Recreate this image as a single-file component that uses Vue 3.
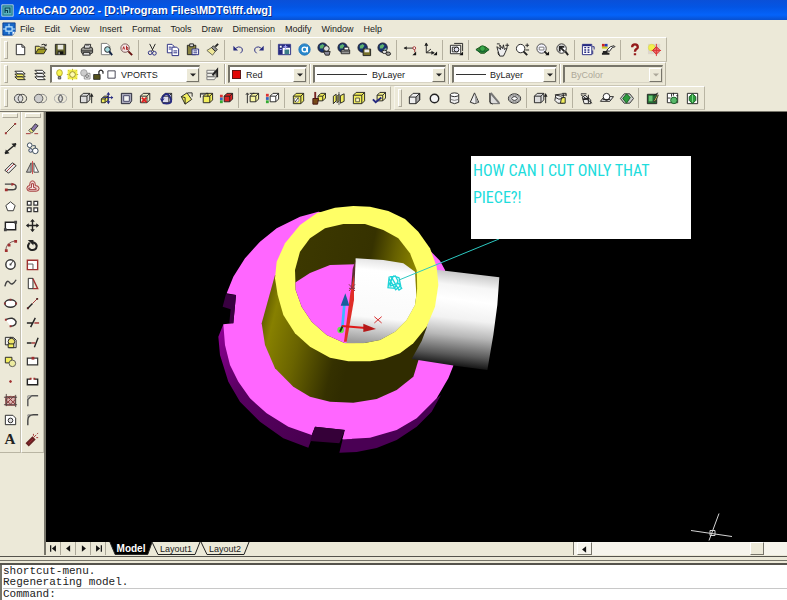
<script setup>
import { h, ref } from 'vue'

const circ = (x, y, r, ry = r) => `M${x - r} ${y}a${r} ${ry} 0 1 0 ${2 * r} 0a${r} ${ry} 0 1 0 ${-2 * r} 0z`
const cube = (fill = '#fff', x = 3, y = 5, s = 7) => [
  `M${x + 0.5} ${y + 0.5}h${s}v${s}h-${s}zl3-3h${s}v${s}l-3 3m0-${s}l3-3`, fill,
]
const Y = '#f2ee5c'
const R = '#a03030'
const G = '#2c9a3c'
const N = '#262a80'
const globe = [[circ(6, 6, 5), '#17306e', '#223'], ['M3 4l3-2 2 2-2 3-3 0z', '#5cb070', 'none'], ['M7 8l3-2v3l-2 1z', '#8cc4a0', 'none']]
const page = (x, y) => [`M${x} ${y}h5l2 2v7h-7z`, '#fff', N]

// Each icon is a list of shapes: [path, fill, stroke, stroke width]
const icons = {
  new: [['M3.5 2.5h6l3 3v8h-9z', '#fff'], ['M9.5 2.5v3h3']],
  open: [['M2.5 12.5v-8h4l1 1h5v2', '#e8e070'], ['M2.5 12.5l3-5h9l-3 5z', '#a09a20'], ['M9 3q3-2 5 1m0-2v2h-2']],
  save: [['M2.5 2.5h11v11h-11z', '#60602c'], ['M5 3h6v5H5z', '#e8e8e0', 'none'], ['M5 10h6v3H5z', '#111', 'none'], ['M6 11h1v2H6z', '#fff', 'none']],
  print: [['M2.5 7.5l2-2h9l1 2v4l-2 1h-9l-1-2z', '#9a9a94'], ['M5.500 6.500l1-4h6l-1 4z', '#fff'], ['M3 9.500h11M4 11.500h8'], ['M7 4h4', 'none', '#555'], ['M5 11h6l1 3H4z', '#ddd']],
  preview: [['M2.500 1.500h6l3 3v9h-9z', '#fff', '#777'], [circ(9, 8, 3), '#a8dce0'], ['M11 10l3 4', 'none', '#124', 2]],
  find: [[circ(6.5, 6.5, 4.500), '#f4e4e4', '#755'], ['M4 8l1-3 1 3M8 4v4m0-2h1.500v2h-1.500', 'none', '#a22'], ['M10 10l4 4', 'none', '#611', 2]],
  cut: [['M5 2l4 8M11 2L7 10'], [circ(5.5, 11.500, 2), 'none', N], [circ(10, 12, 2), 'none', N]],
  copy: [page(2.5, 2.5), page(7.5, 5.500), ['M4 5.500h3M4 7.500h3M9 9.500h4M9 11.500h4', 'none', N]],
  paste: [['M2.500 3.500h9v10h-9z', '#8a8440'], ['M5 2h4v3H5z', '#ddd'], ['M7.500 7.500h7v6h-7z', '#fff', N], ['M9 9.500h4M9 11.500h4', 'none', N]],
  match: [['M2 9l5-3 4 4-3 4z', '#f0e898', '#665'], ['M7 6l2-2 4 4-2 2z', '#999'], ['M11 5l3-3', 'none', '#222', 2]],
  undo: [['M4 8q4-5 8-1 1 3-2 5', 'none', N], ['M2.500 4v5h5z', N, 'none']],
  redo: [['M12 8q-4-5-8-1-1 3 2 5', 'none', N], ['M13.500 4v5h-5z', N, 'none']],
  today: [['M1.500 2.500h13v11h-13z', '#fff', N], ['M2 3h12v3H2zM2 6h4v7H2z', N, 'none'], ['M3 4h2v2H3z', '#fff', 'none'], ['M8 8h5v5H8z', '#3c7f88', 'none'], ['M7 5h4M9 3v5M3 8h2', 'none', '#aaf']],
  point: [[circ(8, 8, 6), '#2888cc', '#1b70b8'], [circ(8, 8, 2.500), 'none', '#fff', 1.500], ['M11 5v6', 'none', '#fff', 1.500]],
  meet: [...globe, [circ(10, 7, 3), '#ddd'], ['M7 10h7l-1 4H9z', '#889']],
  publish: [...globe, ['M4.500 8.500h9v4h-9z', '#ccc'], ['M7.500 5.500h5v3h-5z', '#fff'], ['M5 10.500h8']],
  etransmit: [...globe, ['M6.500 7.500h8v7h-8z', '#76702a'], ['M8 8h5v3H8z', '#eee', 'none']],
  link: [...globe, [circ(8, 10.500, 2.500, 1.800), '#ddd'], [circ(12, 12.500, 2.500, 1.800), '#999']],
  track: [['M1 6.500h10', 'none', '#222'], ['M1 6.500l3-2v4z', '#222', 'none'], [circ(12, 6.500, 1.500), '#fff', R], ['M12.500 8v3', 'none', R], ['M14 10v4h-4z', '#111', 'none']],
  ucs: [['M3.500 2v9.500h7M3.500 11.500l5-4'], ['M2 4l1.500-3 1.500 3M9 10l3 1.500-3 1.500', '#222'], ['M15 10v4h-4z', '#111', 'none']],
  views: [['M1.500 3.500h11v9h-11z', '#fff'], ['M3.500 5.500h6v5h-6z', '#eee'], ['M5.500 1.500h9v8', 'none'], [circ(8, 8, 2.500), '#dde'], ['M15 10v4h-4z', '#111', 'none']],
  orbit: [['M1 8l5-3h5l4 3-5 4H6z', '#3a8a3a', '#175017'], [circ(8, 7, 3), '#3aa84a', '#165c20'], ['M1 8q6 5 14 0', 'none', '#163']],
  pan: [['M2 5l4 3-1-5 3 4 1-4 1 5 3-2-2 5-2 4H5L3 9z', '#eee'], ['M11 3.500h4M13 1.500v4M2 2h3M3 11l1 3']],
  zoomrt: [[circ(6, 7, 4.500), '#fff'], ['M9 10l4 4', 'none', '#222', 2], ['M11 3.500h4M13 1.500v4M11 8.500h4']],
  zoomwin: [[circ(7, 7, 5), '#f4f4ff', '#444'], ['M4.500 5.500h5v3h-5z', '#fff', '#777'], ['M10 10l3 3', 'none', '#222', 2], ['M15 10v4h-4z', '#111', 'none']],
  zoomprev: [[circ(7, 7, 5), '#fff'], ['M5 10V5h5M5 5l5 5', 'none', '#222', 2], ['M11 10l3 4', 'none', '#222', 2]],
  dc: [['M1.500 2.500h10v11h-10z', '#fff', N], ['M2 3.500h9', 'none', N, 2], ['M3.500 6h2M7 6h2M3.500 8.500h2M7 8.500h2M3.500 11h2M7 11h2', 'none', N, 1.500], ['M12 5h2v3M12.500 9v4', 'none', N]],
  props: [['M1 2h3v3H1z', '#c22', 'none'], ['M4 2h3v3H4z', '#263cb0', 'none'], ['M1 5h6v2H1z', '#cc2', 'none'], ['M1 12.500h8M2 10.500h5', 'none', '#222', 2], ['M6 9l4-4 4-1 1 1-3 1-3 4z', '#fff']],
  help: [['M5.500 5.500q0-3 3-3t3 3q0 1-1.500 2T8.500 10.500M8.500 12v2', 'none', '#941a1a', 2.500]],
  assist: [['M1 2h13v11H1z', '#ddd6cb', 'none'], [circ(5, 6, 3.500), '#f2f04c', '#dcdc54'], ['M10 5l4 4-4 4-4-4z', '#ee7070', '#c22'], ['M10 2v13M5 9h10', 'none', '#d33']],
  layers: [['M2 4.500h8l3 3H5z', '#fff'], ['M2 7.500h8l3 3H5z', Y], ['M2 10.500h8l3 3H5z', '#eee36e']],
  layers2: [['M2 3.500h8l3 3H5z', '#fff'], ['M2 7h8l3 3H5z', '#fff'], ['M2 10.500h8l3 3H5z', '#fff']],
  layerprev: [['M2 3.500h9l-2 3H2zM2 7h10l-2 3H2zM2 10.500h10l-2 3H2z', '#f5f5ee', '#777'], ['M8 9l5-6v8', 'none', '#222', 2]],
  bulb: [[circ(8, 6, 3.500, 4), '#f8f450', '#aaa020'], ['M6.500 10.500h3v3h-3z', '#999', '#444']],
  sun: [['M2 2h12v12H2z', '#f5f14c', 'none'], [circ(8, 8, 3.500), '#fffcb0', '#887f20'], ['M8 1v2M8 13v2M1 8h2M13 8h2M3 3l1 1M13 3l-1 1M3 13l1-1M13 13l-1-1', 'none', '#aaa020']],
  freeze: [['M6.500 6.500h7v7h-7z', '#fff', '#777'], [circ(6, 6, 4), '#ccc', '#999'], [circ(10, 10, 2), '#bbb', '#777']],
  lock: [['M2 8h8v6H2z', '#55521c', '#222'], ['M8.500 8V4.500q2.500-4 5 0V7', 'none', '#222', 1.500]],
  swatch: [['M3.500 3.500h9v9h-9z', '#fff', '#223']],
  union: [[circ(6, 8, 4.500), '#ddd', '#444'], [circ(10, 8, 4.500), 'none', '#444']],
  subtract: [[circ(10, 8, 4.500), 'none', '#888'], [circ(6, 8, 4.500), '#ccc', '#555']],
  intersect: [[circ(6, 8, 4.500), 'none', '#aaa'], [circ(10, 8, 4.500), 'none', '#aaa'], ['M8 4q4 4 0 8-4-4 0-8z', '#ddd', '#444']],
  extrude: [cube('#ddd', 1), ['M13.500 13V5'], ['M11.500 6l2-4 2 4z', '#222', 'none']],
  movef: [cube(Y, 2, 8, 4), ['M10 2v11M4 7h11', 'none', N], ['M8 4l2-3 2 3zM13 5l2 2-2 2zM8 11l2 3 2-3z', N, 'none']],
  offsetf: [['M2.500 2.500h11v8l-2 3h-9z', '#aab', '#223'], ['M5 5h6v6H5z', '#f4f4f4', '#446']],
  deletef: [cube('#eec', 1), ['M3 7l5 5M8 7l-5 5', 'none', '#d22', 2]],
  rotatef: [cube('#dde', 3), ['M3 8q5-9 9-1t-8 6', 'none', N, 2], ['M1 8h5L3 12z', N, 'none']],
  taperf: [['M2.500 6l6-4 5 7-7 5z', '#f4f060'], ['M2.500 6l4 1v7', 'none'], ['M9 2h5v4']],
  copyf: [cube(Y, 4), ['M1.500 7V2.500h8V6', 'none'], ['M2 3.500h6', 'none', '#666']],
  colorf: [cube('#d22', 5, 5, 6), ['M1 4h3v3H1z', '#d33', 'none'], ['M1 7h3v3H1z', '#36b', 'none'], ['M1 10h3v3H1z', '#3a3', 'none']],
  copye: [cube('#f8f6a0', 5, 5, 6), ['M2.500 13V3M1 4l1.500-2L4 4M5 2.500h5', 'none']],
  colore: [cube('#fff', 5, 5, 6), ['M1 3h3v3H1z', '#d33', 'none'], ['M1 6.500h3v3H1z', '#36b', 'none'], ['M1 10h3v3H1z', '#3a3', 'none']],
  imprint: [cube(Y, 2, 5, 8), [circ(6, 9.500, 2.500), '#fff', '#887'], ['M4 12l4-5']],
  clean: [cube(Y, 7, 5, 5), ['M4.500 1v7', 'none', '#722', 2], ['M2 8h6l-1 6H2z', '#774a18', '#411']],
  separate: [['M2.500 5.500l3-2v7l-3 3zM6.500 5.500l2-2v7l-2 2z', Y], ['M10 5l4-2v8l-4 2z', Y], ['M8.500 1v14', 'none', '#555']],
  shell: [cube(Y, 2, 4, 9), ['M5 7.500h4v4H5z', '#fffbb8', '#554']],
  check: [cube('#f6f290', 6, 4, 6), ['M2 9l3 3 6-5', 'none', N, 2]],
  box: [['M2.500 6.500l4-4h7v7l-4 4h-7z', '#eee'], ['M9.500 6.500l4-4v7l-4 4z', '#aaa'], ['M2.500 6.500h7']],
  sphere: [[circ(8, 8, 4.500), '#f4f4f4', '#222', 1.500]],
  cylinder: [['M3.500 4v8q4.500 3 9 0V4z', '#eee'], [circ(8, 4, 4.500, 2), '#fff'], ['M4 9q4 2 8 0', 'none', '#777']],
  cone: [['M8 2L3.500 12q4.500 3 9 0z', '#eee'], ['M8 2l1 11 3-1z', '#999', 'none']],
  wedge: [['M3.500 2.500v11h10z', '#ddd', '#666'], ['M3 2v10l3 2'], ['M4 2l9 11', 'none', '#777', 2]],
  torus: [[circ(8, 8, 6.500, 5), '#ddd'], [circ(8, 8, 3, 2), '#fff'], [circ(8, 8, 5, 3.500), 'none', '#888']],
  revolve: [['M3 4l8-1v10H5l-3-3z', '#eee'], ['M9 7h4v6H8z', Y], ['M2 4q6 3 12 0M3 7q3 3 7 1', 'none'], ['M10 2.500h4v3']],
  slice: [['M3.500 6.500l3-2 6 5v4h-7z', '#eee'], ['M2 4l12 9M10 4v9M2 3h6', 'none', '#222'], ['M4 9l6-1', 'none', '#222', 2]],
  section: [['M1.500 11l4-5h10l-4 5z', '#eee'], [circ(8, 6, 3.500), '#fff'], ['M5 8q3 4 6 0M4 9h8']],
  interfere: [['M1.500 8l4-5h6l4 5-4 5h-6z', '#ccc', '#333'], ['M8 3l4 4-4 6-4-5z', G, '#165c20']],
  drawing: [['M2.500 3.500h10v10h-10z', '#246b32'], ['M4 5h4v6H4z', '#64c270', 'none'], ['M9 5l5-3M10 12l4-8', 'none', '#222'], ['M9 11l4-7 1 1-3 6z', '#f2ee5c', '#333']],
  view: [['M2.500 2.500h11v10h-11z', '#fff'], ['M3 7.500h3M7 3v3M9 2v3M12 5h2', 'none'], [circ(9.500, 10, 3.500), '#58b86a', '#175c23']],
  profile: [['M2.500 2.500h11v11h-11z', '#fff'], ['M8 3l3.500 3v4L8 13.500 4.500 10V6z', G, '#175c23'], ['M8 4v8', 'none', '#7ddc8a']],
  line: [['M3 13L13 3', 'none', '#543'], ['M2 12h2v2H2zM12 2h2v2h-2z', R, 'none']],
  xline: [['M2 13L14 3', 'none', '#222', 1.500], ['M2 14l1-5 4 4zM14 2l-1 5-4-4z', '#222', 'none']],
  mline: [['M2 11l8-8 4 3-8 8z', '#eee'], ['M4 12l8-8', 'none', R]],
  pline: [['M2 5.500h8q4 0 4 3t-4 3H3', 'none', '#444', 1.500], ['M2 10h3v3H2zM9 4l4 1.500-4 2z', R, 'none']],
  polygon: [['M8 3l5 4-2 5.500H5L3 7z', '#fff', '#333']],
  rect: [['M2.500 4.500h11v8h-11z', '#fff', '#222', 1.500], ['M1 11h3v3H1zM12 3h3v3h-3z', '#444', 'none']],
  arc: [['M3 13q0-8 10-10', 'none', '#755'], ['M2 12h3v3H2zM5 6h3v3H5zM12 2h3v3h-3z', R, 'none']],
  circle: [[circ(8, 8, 5), '#fff', '#333', 1.500], ['M8 8l3-4', 'none', '#333'], ['M7 7h2v2H7z', '#444', 'none']],
  spline: [['M2 11q2-8 5-4t7-3', 'none', '#444', 1.500]],
  ellipse: [[circ(8, 8, 6, 4), '#fff', '#333', 1.500], ['M1 7h2v2H1zM13 7h2v2h-2zM7 3h2v2H7z', '#833', 'none']],
  earc: [['M3 5q8-4 11 2 0 5-6 5', '#fff', '#333', 1.500], ['M2 4h2v2H2zM7 11h2v2H7z', R, 'none']],
  insert: [['M2.500 2.500h6v8h-6zM8 2.500h3l3 3v8H6', '#eee'], [circ(9, 7, 3.500), '#eee36e'], ['M5.500 9.500h6v4h-6z', Y]],
  block: [['M2.500 3.500h7v6h-7z', Y], [circ(10, 10, 3.500), '#eceba0', '#555']],
  dot: [[circ(8, 8, 1), R, R]],
  hatch: [['M3 4h10v9H3z', '#dcb8b4', '#833'], ['M3 8l5-5M3 12l9-9M7 13l6-6M5 4l8 8M3 7l6 6', 'none', '#833'], ['M1 4.500h14M3.500 1v13M13.500 2v13M1 12.500h14', 'none', '#544']],
  region: [['M2.500 3.500h8l3 3v7h-11z', '#fff'], [circ(8, 9, 2.500), '#ddd']],
  erase: [['M6 9l5-6 3 2-5 6z', '#8a76a8', '#333'], ['M4 10l2-2 3 3-2 2z', '#e6e67c', '#444'], ['M1 13.500h5M10 13.500h4', 'none', R]],
  copyo: [[circ(5, 4.500, 2.500), '#fff', '#345'], [circ(11, 10.500, 3), '#fff', '#345'], [circ(6, 10, 2), '#dde', '#345'], ['M8 5h3v3', 'none', '#345']],
  mirror: [['M6.500 3v10h-5z', '#bbb', '#444'], ['M9.500 3v10h5z', '#fff', '#444'], ['M8 1v14', 'none', '#c44']],
  offset: [['M2 10q0-3 3-3 0-5 3-5t3 5q4 0 4 3 0 3-3 3H5q-3 0-3-3z', '#ecd0cc', R], ['M4 10q2-1 3-1V5h2v4q3 0 3 2H4z', '#fff', R]],
  array: [['M2.500 2.500h4v4h-4zM9.500 2.500h4v4h-4zM2.500 9.500h4v4h-4zM9.500 9.500h4v4h-4z', '#fff', '#333', 1.300]],
  move: [['M8 2v12M2 8h12', 'none', '#222', 1.500], ['M8 1l2.500 3h-5zM8 15l2.500-3h-5zM1 8l3-2.500v5zM15 8l-3-2.500v5z', '#222', 'none']],
  rotate: [['M5 5q-4 5 1 7.500Q12 14 12.500 8.500 12 5 8 4.500', 'none', '#222', 2.200], ['M3 2h6v6z', '#222', 'none']],
  scale: [['M2.500 3.500h11v10h-11z', '#fff', R, 1.500], ['M3 7.500h5.500V13', 'none', '#555']],
  stretch: [['M3.500 2.500h5v11h-5z', '#fff'], ['M8.500 3l5 10.500h-5', 'none', R, 1.500]],
  lengthen: [['M3 13l5-5', 'none', '#222', 1.500], ['M8 8l5-5', 'none', R], ['M2 12h2v2H2zM12 2h2v2h-2z', '#522', 'none']],
  trim: [['M2 8.500h7M11 3L6 13', 'none', '#222', 1.500], ['M10 8.500h5', 'none', R, 1.500]],
  extend: [['M2 8.500h5M14 3l-4 10', 'none', '#222', 1.500], ['M7 8.500h4', 'none', R, 1.500]],
  breakp: [['M2.500 4.500h11v7h-11z', '#fff', '#333', 1.300], ['M7 3h3v3H7z', R, 'none']],
  breaks: [['M6 5.500H2.500v6h11v-6H10', '#fff', '#222', 1.500], ['M5 4h2v2H5zM9 4h2v2H9z', R, 'none']],
  chamfer: [['M3 14V7l4-4h7', 'none', '#555', 1.500], ['M3 6V3h4', 'none', '#888']],
  fillet: [['M3 14V9q0-6 6-6h5', 'none', '#444', 1.500], ['M3 5V3h3', 'none', '#888']],
  explode: [['M2 12l6-6 2 2-6 6z', '#a82838', '#622', 2], ['M9 6l3-3M12 6h2M9 2v2M13 2l1-1', 'none', R]],
  first: [['M4.500 4v8', 'none', '#111', 1.500], ['M11 4v8L6 8z', '#111', 'none']],
  prev: [['M10 4v8L5 8z', '#111', 'none']],
  next: [['M6 4v8l5-4z', '#111', 'none']],
  last: [['M11.500 4v8', 'none', '#111', 1.500], ['M5 4v8l5-4z', '#111', 'none']],
  down: [['M4 6h8l-4 4z', 'currentColor', 'none']],
  app: [['M1 1h14v14H1z', '#1c7a8c', '#cfe6ee'], ['M3 3h10v10H3z', '#5bb4bf', 'none'], ['M5 11V5h6v6M5 8h3v3', 'none', '#053c50', 1.300]],
  doc: [['M1 1h14v10l-3 4H1z', '#1668c8', '#0a3c8c'], ['M4.500 5.500h7v5h-7zM8 2v4M8 10v4M1 8h3M11 8h4', 'none', '#bfe6ff', 1.300], ['M15 11l-3 4v-4z', '#fff', 'none']],
}

const Icon = (props) =>
  h('svg', { viewBox: '0 0 16 16', class: 'icon', 'aria-hidden': 'true' },
    icons[props.name].map(([d, fill = 'none', stroke = '#222', w = 1]) =>
      h('path', { d, fill, stroke, 'stroke-width': w })))
Icon.props = ['name']

const menus = ['File', 'Edit', 'View', 'Insert', 'Format', 'Tools', 'Draw', 'Dimension', 'Modify', 'Window', 'Help']
const standard = [
  ['new', 'open', 'save'], ['print', 'preview', 'find'], ['cut', 'copy', 'paste', 'match'], ['undo', 'redo'],
  ['today', 'point', 'meet', 'publish', 'etransmit', 'link'], ['track', 'ucs'], ['views'],
  ['orbit', 'pan', 'zoomrt', 'zoomwin', 'zoomprev'], ['dc', 'props'], ['help', 'assist'],
]
const solidsEdit = [
  ['union', 'subtract', 'intersect'],
  ['extrude', 'movef', 'offsetf', 'deletef', 'rotatef', 'taperf', 'copyf', 'colorf'],
  ['copye', 'colore'], ['imprint', 'clean', 'separate', 'shell', 'check'],
]
const solids = [
  ['box', 'sphere', 'cylinder', 'cone', 'wedge', 'torus'], ['extrude', 'revolve'],
  ['slice', 'section', 'interfere'], ['drawing', 'view', 'profile'],
]
const draw = ['line', 'xline', 'mline', 'pline', 'polygon', 'rect', 'arc', 'circle', 'spline', 'ellipse', 'earc', 'insert', 'block', 'dot', 'hatch', 'region', 'text']
const modify = ['erase', 'copyo', 'mirror', 'offset', 'array', 'move', 'rotate', 'scale', 'stretch', 'lengthen', 'trim', 'extend', 'breakp', 'breaks', 'chamfer', 'fillet', 'explode']
const layerState = ['bulb', 'sun', 'freeze', 'lock', 'swatch']
const tabs = ['Model', 'Layout1', 'Layout2']
const active = ref('Model')
const command = ref('')
</script>

<template>
  <div class="app">
    <header class="title"><Icon name="app" /><h1>AutoCAD 2002 - [D:\Program Files\MDT6\fff.dwg]</h1></header>

    <nav class="menu">
      <Icon name="doc" />
      <button v-for="m in menus" :key="m">{{ m }}</button>
    </nav>

    <div class="row tall">
      <div class="bar">
        <i class="grip"></i>
        <div v-for="(g, i) in standard" :key="i" class="group">
          <button v-for="n in g" :key="n" class="tool" :aria-label="n"><Icon :name="n" /></button>
        </div>
      </div>
    </div>

    <div class="row">
      <div class="bar">
        <i class="grip"></i>
        <button class="tool" aria-label="layers"><Icon name="layers" /></button>
        <button class="tool" aria-label="layer states"><Icon name="layers2" /></button>
        <div class="combo layer">
          <Icon v-for="s in layerState" :key="s" :name="s" />
          <select aria-label="Layer"><option>VPORTS</option></select>
          <span class="arrow"><Icon name="down" /></span>
        </div>
        <button class="tool" aria-label="previous layer"><Icon name="layerprev" /></button>
        <i class="split"></i>
        <div class="combo color">
          <span class="red"></span>
          <select aria-label="Color"><option>Red</option></select>
          <span class="arrow"><Icon name="down" /></span>
        </div>
        <i class="split"></i>
        <div class="combo ltype">
          <span class="rule"></span>
          <select aria-label="Linetype"><option>ByLayer</option></select>
          <span class="arrow"><Icon name="down" /></span>
        </div>
        <i class="split"></i>
        <div class="combo weight">
          <span class="rule"></span>
          <select aria-label="Lineweight"><option>ByLayer</option></select>
          <span class="arrow"><Icon name="down" /></span>
        </div>
        <i class="split"></i>
        <div class="combo style">
          <select aria-label="Plot style" disabled><option>ByColor</option></select>
          <span class="arrow"><Icon name="down" /></span>
        </div>
      </div>
    </div>

    <div class="row">
      <div v-for="(bar, b) in [solidsEdit, solids]" :key="b" class="bar">
        <i class="grip"></i>
        <div v-for="(g, i) in bar" :key="i" class="group">
          <button v-for="n in g" :key="n" class="tool" :aria-label="n"><Icon :name="n" /></button>
        </div>
      </div>
    </div>

    <main class="work">
      <aside class="docks">
        <div v-for="(list, i) in [draw, modify]" :key="i" class="dock">
          <i class="hgrip"></i>
          <button v-for="n in list" :key="n" class="tool" :aria-label="n">
            <b v-if="n === 'text'" class="letter">A</b>
            <Icon v-else :name="n" />
          </button>
        </div>
      </aside>

      <section class="drawing">
        <div class="canvas">
          <svg class="scene" viewBox="46 112 741 430" preserveAspectRatio="xMinYMin meet" role="img" aria-label="Model">
            <defs>
              <linearGradient id="wall" gradientUnits="userSpaceOnUse" x1="155" y1="330" x2="440" y2="400">
                <stop offset="0" stop-color="#5a5400" /><stop offset=".15" stop-color="#878000" />
                <stop offset=".45" stop-color="#6a6400" /><stop offset=".85" stop-color="#353100" /><stop offset="1" stop-color="#302c00" />
              </linearGradient>
              <linearGradient id="inside" gradientUnits="userSpaceOnUse" x1="280" y1="130" x2="620" y2="200">
                <stop offset="0" stop-color="#3c3800" /><stop offset=".6" stop-color="#363200" />
                <stop offset=".8" stop-color="#655f00" /><stop offset="1" stop-color="#8c8500" />
              </linearGradient>
              <linearGradient id="pipe" gradientUnits="userSpaceOnUse" x1="775" y1="232" x2="742" y2="514">
                <stop offset="0" stop-color="#c4c4c4" /><stop offset=".15" stop-color="#f6f6f6" /><stop offset=".3" stop-color="#fff" />
                <stop offset=".5" stop-color="#f2f2f2" /><stop offset=".68" stop-color="#b8b8b8" />
                <stop offset=".88" stop-color="#5a5a5a" /><stop offset="1" stop-color="#161616" />
              </linearGradient>
              <linearGradient id="inner" gradientUnits="userSpaceOnUse" x1="520" y1="190" x2="495" y2="445">
                <stop offset="0" stop-color="#e0e0e0" /><stop offset=".15" stop-color="#fff" />
                <stop offset=".7" stop-color="#fafafa" /><stop offset="1" stop-color="#9c9c9c" />
              </linearGradient>
              <linearGradient id="rim" gradientUnits="userSpaceOnUse" x1="25" y1="420" x2="300" y2="750">
                <stop offset="0" stop-color="#8a0090" /><stop offset=".4" stop-color="#580060" /><stop offset="1" stop-color="#480050" />
              </linearGradient>
              <clipPath id="hole"><path d="M400 87h65l55 18 45 25 35 45 20 50 2 55-7 50-25 45-35 35-45 25-50 10h-55l-55-25-45-40-30-45-18-50-2-60 15-55 30-40 45-30z" /></clipPath>
            </defs>

            <g transform="translate(210 195) scale(.33333)">
              <path fill="url(#rim)" d="M40 388L25 425l5 55 25 80 35 60 60 60 70 50 75 28 15-40L150 630z" />
              <path fill="#4a0054" d="M400 725l-12 48 52-2 60-12 60-24 60-40 45-45 28-50-80 60z" />
              <path fill="#ff66ff" d="M325 50l-55 15-70 35-50 40-45 50-35 55-20 50 28 5-8 85-30 3 5 62 15 60 25 50 35 50 50 45 65 40 70 25 10-25 90 10-5 28 80-5 80-23 60-35 60-60 35-60 15-38L705 225l-15-28-25-25-60-70z" />
              <path fill="#390040" d="M48 297l30 3-8 85-12-2 4-40-24-8z" />
              <path fill="#350038" d="M315 695l90 10-17 40-88-7z" />
              <path fill="#ff66ff" d="M405 705l-8 28 30-1z" />
              <path fill="url(#wall)" d="M195 240l-40 145 10 65 30 70 55 55 50 30 60 15 70 3 70-11 60-27 50-40 45-145 20-130z" />
              <path fill="url(#pipe)" d="M680 224l188 23-6 83-12 90-18 105-92-12-135-21 30-54 15-40z" />
              <path fill="#ffff66" d="M375 38l55-5 50 2 55 13 50 24 40 38 35 50 20 55 5 55-10 65-25 60-40 50-40 30-50 18-40 6h-65l-55-11-60-33-45-40-35-55-17-60-8-50 5-50 25-55 45-55 50-35z" />
              <g clip-path="url(#hole)">
                <path fill="url(#inside)" d="M240 80h400v380H240z" />
                <path fill="#ff66ff" d="M245 270l12-8 43-28 60-24 75-2v250H240z" />
                <path fill="url(#inner)" d="M437 190l83 5 60 10 35 25 4 70-20 170-190-25z" />
                <path fill="#5a3030" d="M437 192l-9 30-5 60 10 0z" />
                <path fill="#e02d28" d="M432 240l-11 55-19 145h8l22-125z" />
                <path fill="none" stroke="#8b3548" stroke-width="3" d="M417 268l18 20m0-20l-18 20m0-8h18" />
              </g>
              <path fill="none" stroke="#38b8ff" stroke-width="8" d="M397 397l6-68" />
              <path fill="#175f9c" d="M392 332l14-37 12 37z" />
              <path fill="none" stroke="#df1818" stroke-width="6" d="M395 393l72 6" />
              <path fill="#b51818" d="M460 386l38 16-38 9z" />
              <circle cx="392" cy="405" r="10" fill="#68e050" />
              <path fill="none" stroke="#103c10" stroke-width="6" d="M390 410l7-15" />
              <path fill="none" stroke="#d83030" stroke-width="3" d="M493 365l22 19m0-19l-22 19" />
              <path fill="none" stroke="#20d4d8" stroke-width="4" d="M538 246l18-3 8 15-10 22-20-2 3-28 20 34 15-12-5-24-16-5-16 30m10-25l22 37 8-5-9-15-25 8 5-28" />
            </g>

            <path d="M399 280L499 239" fill="none" stroke="#2cc8c0" />
            <path d="M471 156h220v83H471z" fill="#fff" />
            <text class="note" x="473" y="176">HOW CAN I CUT ONLY THAT</text>
            <text class="note" x="473" y="203">PIECE?!</text>
            <path d="M691 530.500l41 6M719 513.500l-10 27M710 530.500h5v5h-5z" fill="none" stroke="#d4d4d4" />
          </svg>
        </div>

        <div class="strip">
          <button v-for="n in ['first', 'prev', 'next', 'last']" :key="n" class="nav" :aria-label="n"><Icon :name="n" /></button>
          <div class="tabs">
            <button v-for="t in tabs" :key="t" class="tab" :class="{ on: t === active }" @click="active = t">
              <svg viewBox="0 0 50 13" preserveAspectRatio="none" aria-hidden="true"><path d="M1 0l6 12.500h37L49 0" /></svg>
              <span>{{ t }}</span>
            </button>
          </div>
          <div class="scroll">
            <button class="nav raised" aria-label="scroll left"><Icon name="prev" /></button>
            <div class="track"><i class="thumb"></i></div>
          </div>
        </div>
      </section>
    </main>

    <div class="splitter"></div>
    <footer class="console">
      <p>shortcut-menu.</p>
      <p>Regenerating model.</p>
      <div class="prompt"><label for="cmd">Command:</label><input id="cmd" v-model="command" autocomplete="off" /></div>
    </footer>
  </div>
</template>

<style>
body { margin: 0; background: #ece9d8; }
</style>

<style scoped>
* { box-sizing: border-box; }
.app {
  display: flex;
  flex-direction: column;
  min-height: 100vh;
  background: #ece9d8;
  color: #222;
  font: 9px/12px "Liberation Sans", Arial, sans-serif;
}
button, select, input { font: inherit; color: inherit; border: 0; background: none; padding: 0; margin: 0; border-radius: 0; }
.icon { width: 16px; height: 16px; flex: none; display: block; }

.title {
  display: flex;
  align-items: center;
  gap: 4px;
  height: 20px;
  padding-left: 1px;
  background: linear-gradient(#0a50d8, #0355e4 35%, #0463fa 75%, #0850d0);
  color: #fff;
}
.title .icon { width: 13px; height: 13px; }
h1 { margin: 0; font-size: 11px; line-height: 20px; text-shadow: 1px 1px #0a2f86; white-space: nowrap; }

.menu { display: flex; align-items: center; gap: 10px; height: 17px; padding-left: 2px; }
.menu .icon { width: 14px; height: 14px; margin-right: -6px; }

.row { display: flex; gap: 3px; height: 24px; }
.row.tall { height: 25px; }
.bar {
  display: flex;
  align-items: center;
  padding: 0 2px 0 3px;
  border: 1px solid;
  border-color: #fff #b9b5a3 #c9c5b4 #f6f4ea;
}
.grip { width: 4px; height: 18px; margin-right: 2px; border: 1px solid; border-color: #fff #aca899 #aca899 #fff; }
.group { display: flex; }
.group + .group { margin-left: 2px; padding-left: 3px; border-left: 1px solid #b5b1a0; }
.tool { display: grid; place-items: center; width: 20px; height: 20px; }
.tool .icon { width: 15px; height: 15px; }

.combo {
  display: flex;
  align-items: center;
  height: 18px;
  background: #fff;
  border: 1px solid;
  border-width: 2px 1px 1px 2px;
  border-color: #77756a #d8d4c4 #d8d4c4 #77756a;
}
.combo select { flex: 1; min-width: 0; height: 15px; appearance: none; line-height: 14px; }
.arrow {
  display: grid;
  place-items: center;
  width: 13px;
  height: 14px;
  background: #ece9d8;
  border: 1px solid;
  border-color: #fff #77756a #77756a #fff;
  pointer-events: none;
}
.arrow .icon { width: 12px; height: 12px; }
.layer { width: 150px; margin-right: 2px; padding-left: 1px; }
.layer .icon { width: 13px; height: 13px; }
.layer .arrow .icon { width: 12px; height: 12px; }
.layer select { padding-left: 3px; }
.color { width: 79px; padding-left: 2px; gap: 5px; }
.red { width: 9px; height: 9px; background: #e00808; border: 1px solid #601818; }
.ltype { width: 133px; padding-left: 2px; gap: 5px; }
.weight { width: 105px; padding-left: 2px; gap: 4px; }
.rule { height: 1px; background: #333; }
.ltype .rule { width: 50px; }
.weight .rule { width: 30px; }
.style { width: 100px; padding-left: 6px; background: #ece9d8; color: #aca899; }
.style select { opacity: 1; }
.split { width: 2px; height: 20px; margin: 0 2px; border-left: 1px solid #aca899; border-right: 1px solid #fff; }

.work { display: flex; flex: 1; margin-top: 1px; border-top: 1px solid #77756a; }
.docks { display: flex; flex: none; align-items: flex-start; width: 44px; }
.dock {
  display: grid;
  grid-template-rows: 7px repeat(17, 1fr);
  justify-items: center;
  align-items: center;
  height: 341px;
  width: 21px;
  border-right: 1px solid #c2beae;
  border-bottom: 1px solid #b9b5a3;
  padding-bottom: 3px;
}
.dock + .dock { width: 23px; border-left: 1px solid #fff; }
.dock .tool { height: 19px; }
.letter { font: bold 15px/16px "Liberation Serif", "Times New Roman", serif; }
.hgrip { width: 16px; height: 5px; border: 1px solid; border-color: #fff #aca899 #aca899 #fff; }

.drawing { display: flex; flex: 1; flex-direction: column; min-width: 0; border-left: 2px solid #77756a; }
.canvas { flex: 1; background: #000; }
.scene { display: block; width: 100%; }
.note { fill: #20dcdc; font: 16px "Roboto Condensed", "Open Sans Condensed", Lato, sans-serif; }

.strip { display: flex; height: 13px; }
.nav { display: grid; place-items: center; width: 15px; height: 13px; border-right: 1px solid #aca899; }
.nav .icon { width: 13px; height: 13px; }
.raised { border: 1px solid; border-color: #fff #77756a #77756a #fff; }
.tabs { display: flex; flex: 1; padding-left: 3px; }
.tab { position: relative; width: 50px; height: 13px; margin-right: -1px; }
.tab.on { width: 44px; margin-right: -2px; color: #fff; font-weight: bold; font-size: 10px; }
.tab svg { position: absolute; inset: 0; width: 100%; height: 100%; }
.tab path { fill: #ece9d8; stroke: #222; }
.tab.on path { fill: #000; }
.tab span { position: relative; }
.scroll { display: flex; width: 214px; padding-left: 3px; border-left: 1px solid #77756a; background: #f6f4ec; }
.track { display: flex; flex: 1; justify-content: flex-end; padding-right: 23px; }
.thumb { width: 14px; height: 13px; background: #ece9d8; border: 1px solid; border-color: #fff #77756a #77756a #fff; }

.splitter {
  height: 10px;
  background: linear-gradient(#ece9d8 1px, #55534c 1px 2px, #ece9d8 2px 5px, #77756a 5px 6px, #ece9d8 6px 8px, #55534c 8px 10px);
}
.console { height: 35px; padding: 1px 0 0 1px; border-left: 2px solid #77756a; background: #fff; font: 11px/11px "Liberation Mono", "Courier New", monospace; }
.console p { margin: 0; }
.prompt { display: flex; align-items: center; height: 12px; border-top: 1px solid #c8c8c8; }
.prompt input { flex: 1; min-width: 0; height: 11px; outline: 0; }
</style>
